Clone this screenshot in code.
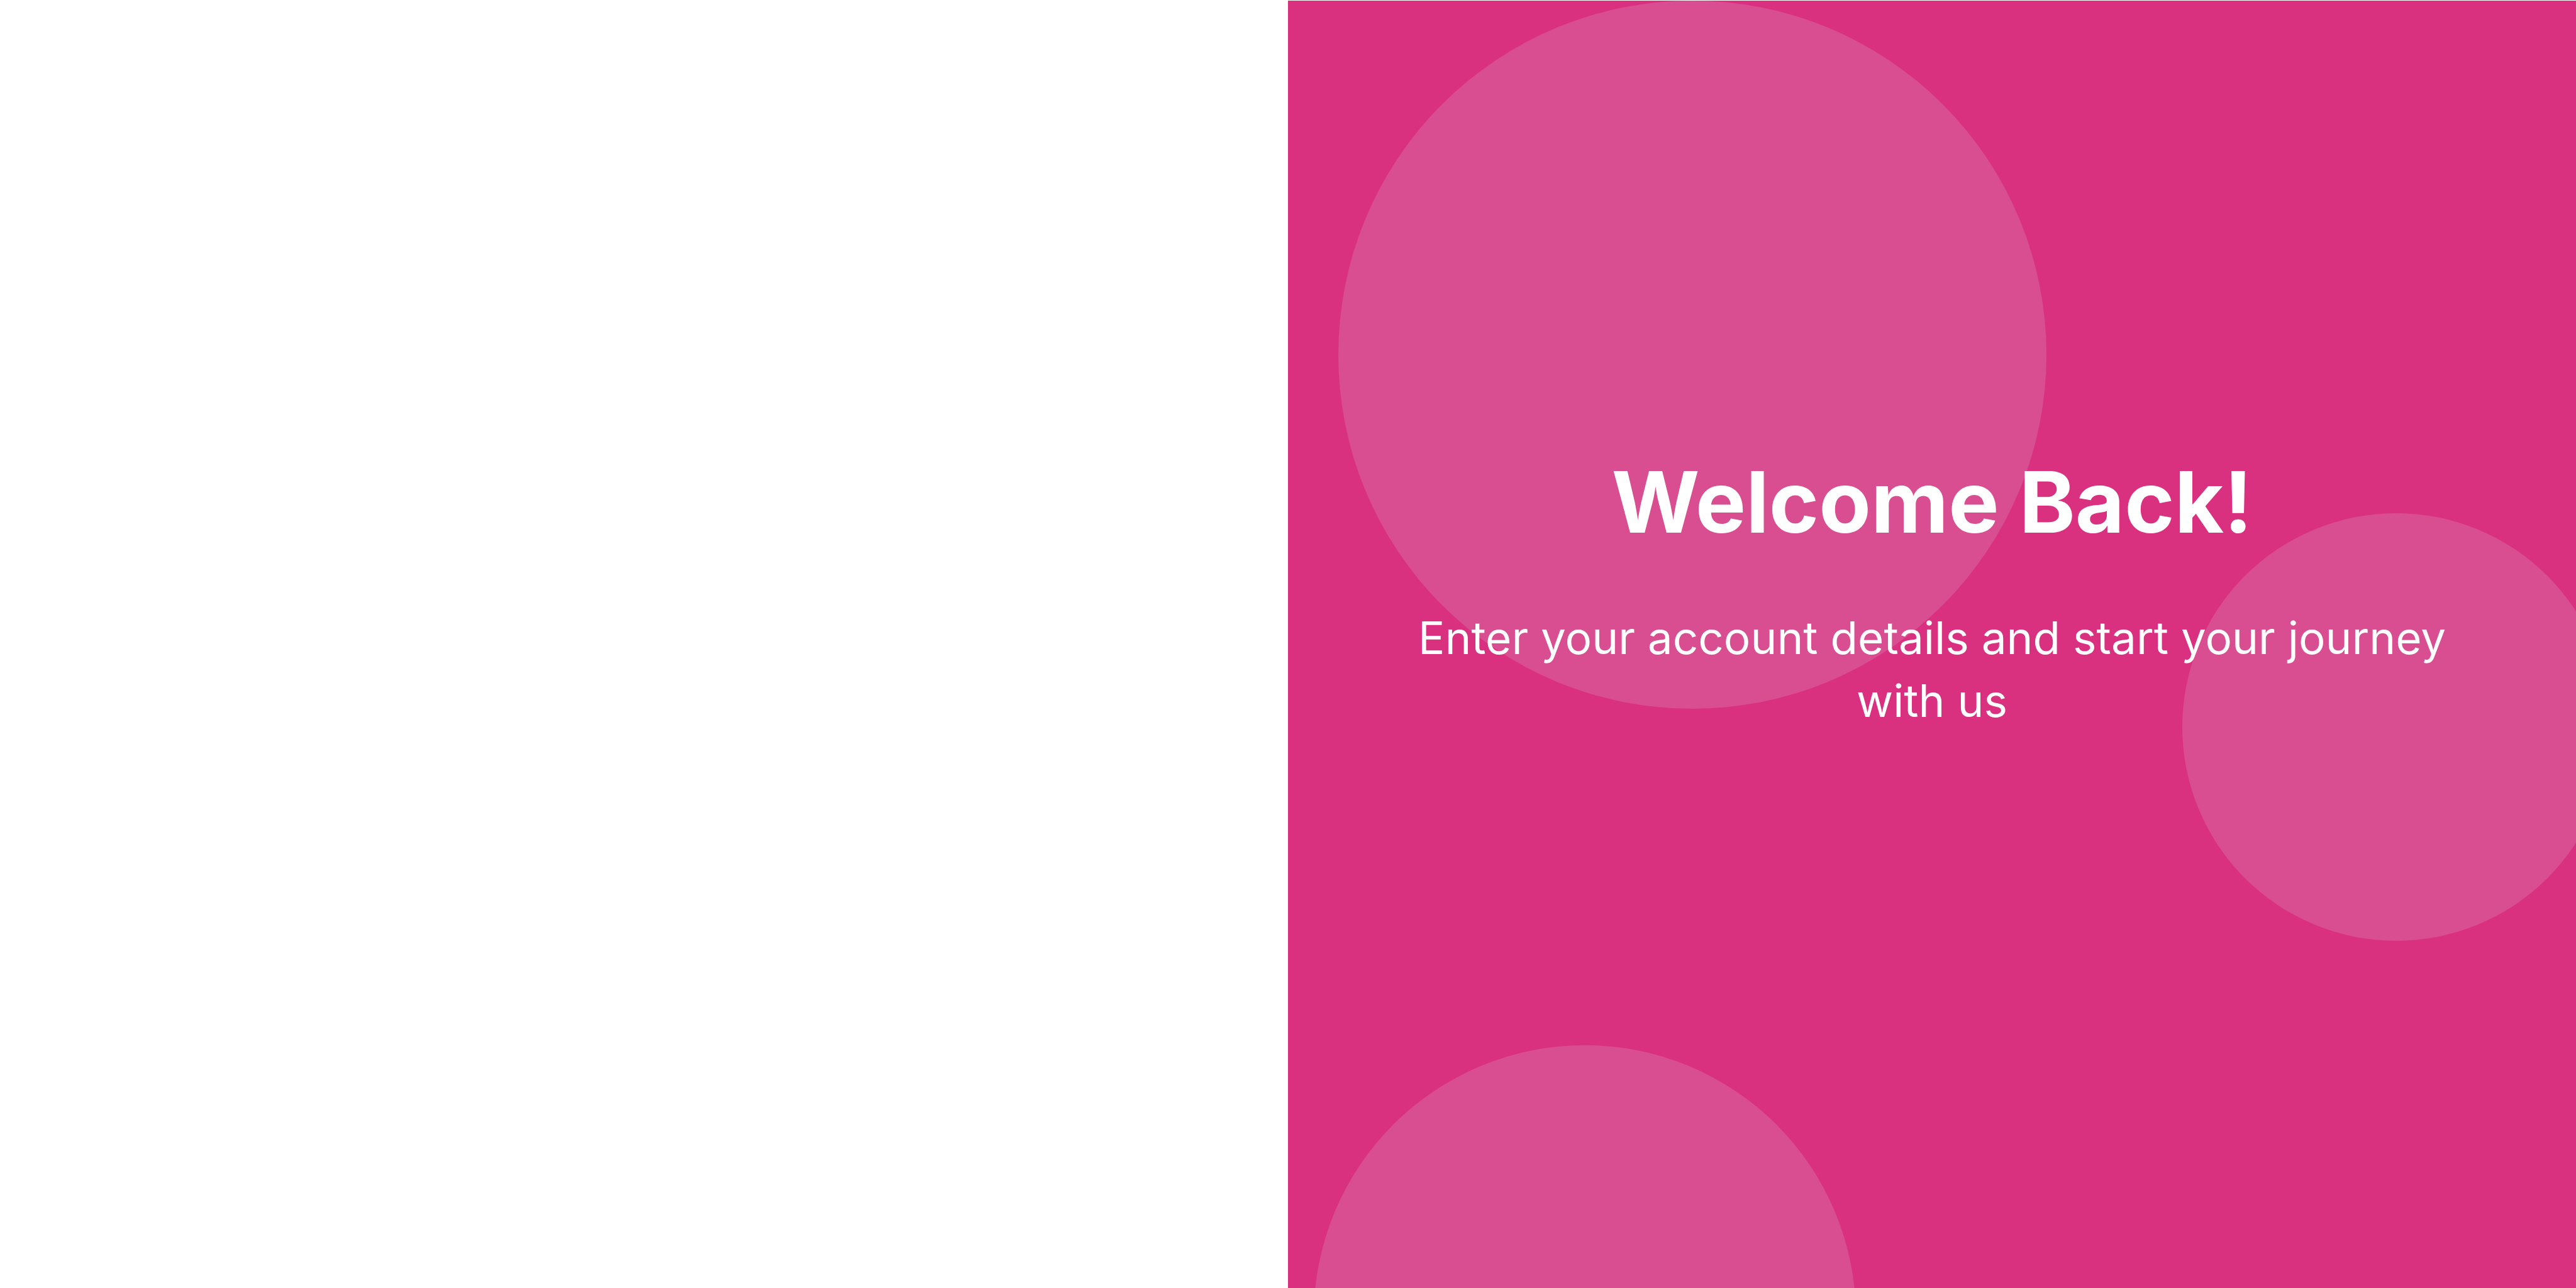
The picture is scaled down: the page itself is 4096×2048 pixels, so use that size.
<main class="page">
  <section class="blank"></section>
  <section class="welcome">
    <span class="circle large"></span>
    <span class="circle side"></span>
    <span class="circle bottom"></span>
    <div class="copy">
      <h1>Welcome Back!</h1>
      <p>Enter your account details and start your journey with us</p>
    </div>
  </section>
</main>

<style>
  :global(body) {
    margin: 0;
    background: #fff;
  }
  .page {
    display: grid;
    grid-template-columns: 1fr 1fr;
    min-height: 100vh;
    font-family: Inter, "Liberation Sans", sans-serif;
    color: #fff;
  }
  .welcome {
    position: relative;
    overflow: hidden;
    box-sizing: border-box;
    padding: 707px 192px;
    background: #da3080;
    border-top: 1px solid #fff;
    text-align: center;
  }
  .circle {
    position: absolute;
    border-radius: 50%;
    background: #d9d9d9;
    opacity: 0.18;
  }
  .large {
    left: 80px;
    top: 0;
    width: 1126px;
    height: 1126px;
  }
  .side {
    left: 1422px;
    top: 815px;
    width: 680px;
    height: 680px;
  }
  .bottom {
    left: 41px;
    top: 1661px;
    width: 862px;
    height: 862px;
  }
  .copy {
    position: relative;
    display: flex;
    flex-direction: column;
    gap: 76px;
  }
  h1,
  p {
    margin: 0;
  }
  h1 {
    font-size: 135px;
    line-height: 180px;
    font-weight: 700;
  }
  p {
    font-size: 71px;
    line-height: 100px;
    font-weight: 400;
  }
</style>
